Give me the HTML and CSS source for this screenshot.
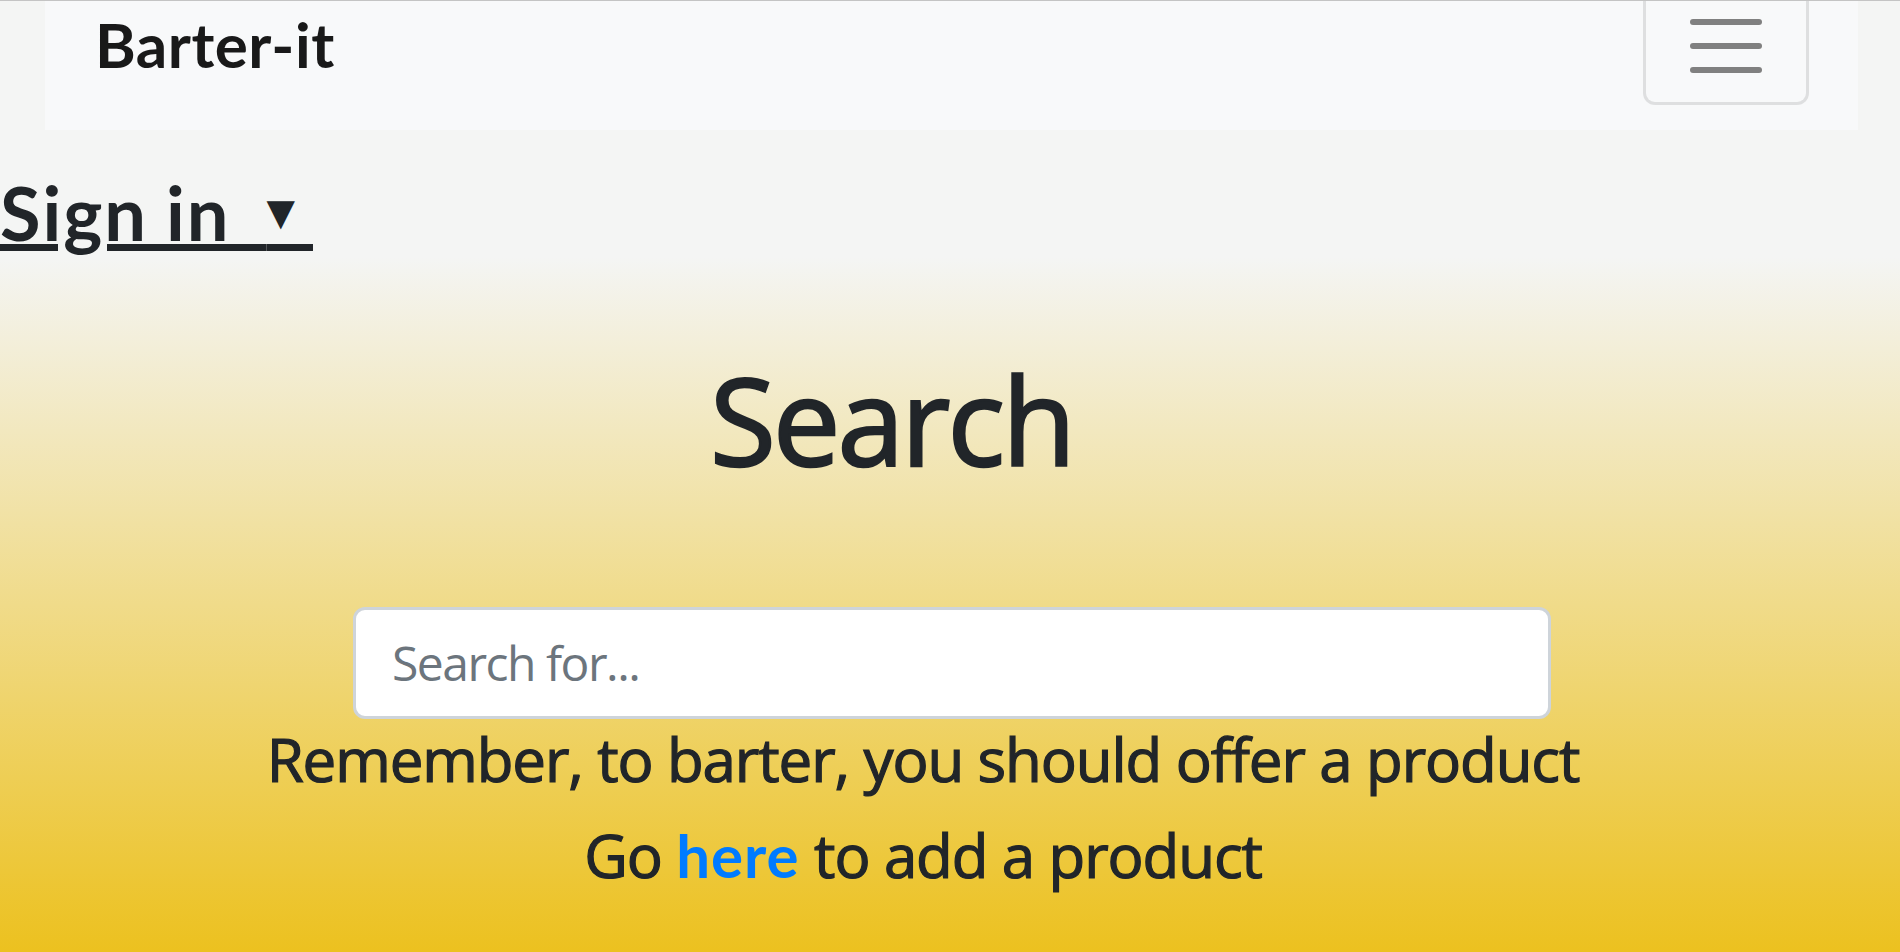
FILE: index.html
```html
<!DOCTYPE html>
<html lang="en">
<head>
<meta charset="utf-8">
<title>Barter-it</title>
<link rel="stylesheet" href="styles.css">
</head>
<body>
  <nav class="navbar">
    <a class="brand" href="#">Barter-it</a>
    <button class="toggler" type="button" aria-label="Toggle navigation">
      <span class="bar"></span>
      <span class="bar"></span>
      <span class="bar"></span>
    </button>
  </nav>
  <div class="account">
    <a class="signin" href="#">Sign in&nbsp;&nbsp;<span class="caret">▼</span>&nbsp;</a>
  </div>
  <main class="search-page">
    <h1 class="title">Search</h1>
    <div class="search-box">
      <input class="search-input" type="text" placeholder="Search for...">
    </div>
    <h5 class="note">Remember, to barter, you should offer a product</h5>
    <h5 class="note">Go <a class="here" href="#">here</a> to add a product</h5>
  </main>
</body>
</html>
```

FILE: styles.css
```css
html {
  height: 100%;
}
body {
  margin: 0;
  min-height: 100%;
  box-sizing: border-box;
  border-top: 1px solid #c4c4c4;
  background: linear-gradient(to bottom, #f4f5f4 0%, #f4f5f4 27%, #ecc11f 100%);
  font-family: "Open Sans", "Noto Sans", sans-serif;
  color: #212529;
}
.navbar {
  display: flex;
  justify-content: space-between;
  align-items: flex-start;
  height: 129px;
  margin: 0 42px 0 45px;
  background: #f8f9fa;
}
.brand {
  font-family: Lato, sans-serif;
  font-weight: 700;
  font-size: 62px;
  line-height: 62px;
  padding: 12px 0 0 50px;
  letter-spacing: 0.5px;
  color: rgba(0, 0, 0, 0.9);
  text-decoration: none;
}
.toggler {
  display: flex;
  flex-direction: column;
  align-items: center;
  gap: 18px;
  box-sizing: border-box;
  width: 166px;
  height: 104px;
  margin: 0 49px 0 0;
  padding: 18px 0 0;
  background: transparent;
  border: 3px solid rgba(0, 0, 0, 0.1);
  border-top: none;
  border-radius: 0 0 12px 12px;
}
.bar {
  display: block;
  width: 72px;
  height: 6px;
  border-radius: 3px;
  background: #808080;
}
.account {
  margin-top: 39px;
}
.signin {
  font-family: Lato, sans-serif;
  font-weight: 700;
  font-size: 74px;
  line-height: 1.2;
  letter-spacing: 2px;
  word-spacing: -2px;
  color: #212529;
  text-decoration: underline;
  text-decoration-thickness: 7px;
  text-underline-offset: 3px;
}
.caret {
  font-family: "DejaVu Sans", sans-serif;
  font-size: 37px;
  letter-spacing: 0;
  vertical-align: 16px;
}
.search-page {
  margin-top: 90px;
}
.title {
  margin: 0;
  padding-right: 117px;
  text-align: center;
  font-size: 120px;
  font-weight: 400;
  letter-spacing: -2.8px;
  line-height: 1.2;
  -webkit-text-stroke: 2.4px #212529;
}
.search-box {
  margin: 115px 0 0 353px;
}
.search-input {
  display: block;
  box-sizing: border-box;
  width: 1198px;
  height: 112px;
  padding: 0 36px;
  border: 3px solid #ced4da;
  border-radius: 12px;
  background: #fff;
  font-family: "Open Sans", "Noto Sans", sans-serif;
  font-size: 48px;
  letter-spacing: -1.5px;
  color: #495057;
  outline: none;
}
.search-input::placeholder {
  color: #6c757d;
}
.note {
  margin: 4px 0 24px;
  padding-right: 54px;
  text-align: center;
  font-size: 60px;
  font-weight: 400;
  letter-spacing: -1.1px;
  line-height: 72px;
  -webkit-text-stroke: 1.2px #212529;
}
.note + .note {
  margin-top: 0;
}
.here {
  font-family: Lato, sans-serif;
  font-weight: 700;
  letter-spacing: 1px;
  color: #007bff;
  -webkit-text-stroke: 0;
  text-decoration: none;
}
```
